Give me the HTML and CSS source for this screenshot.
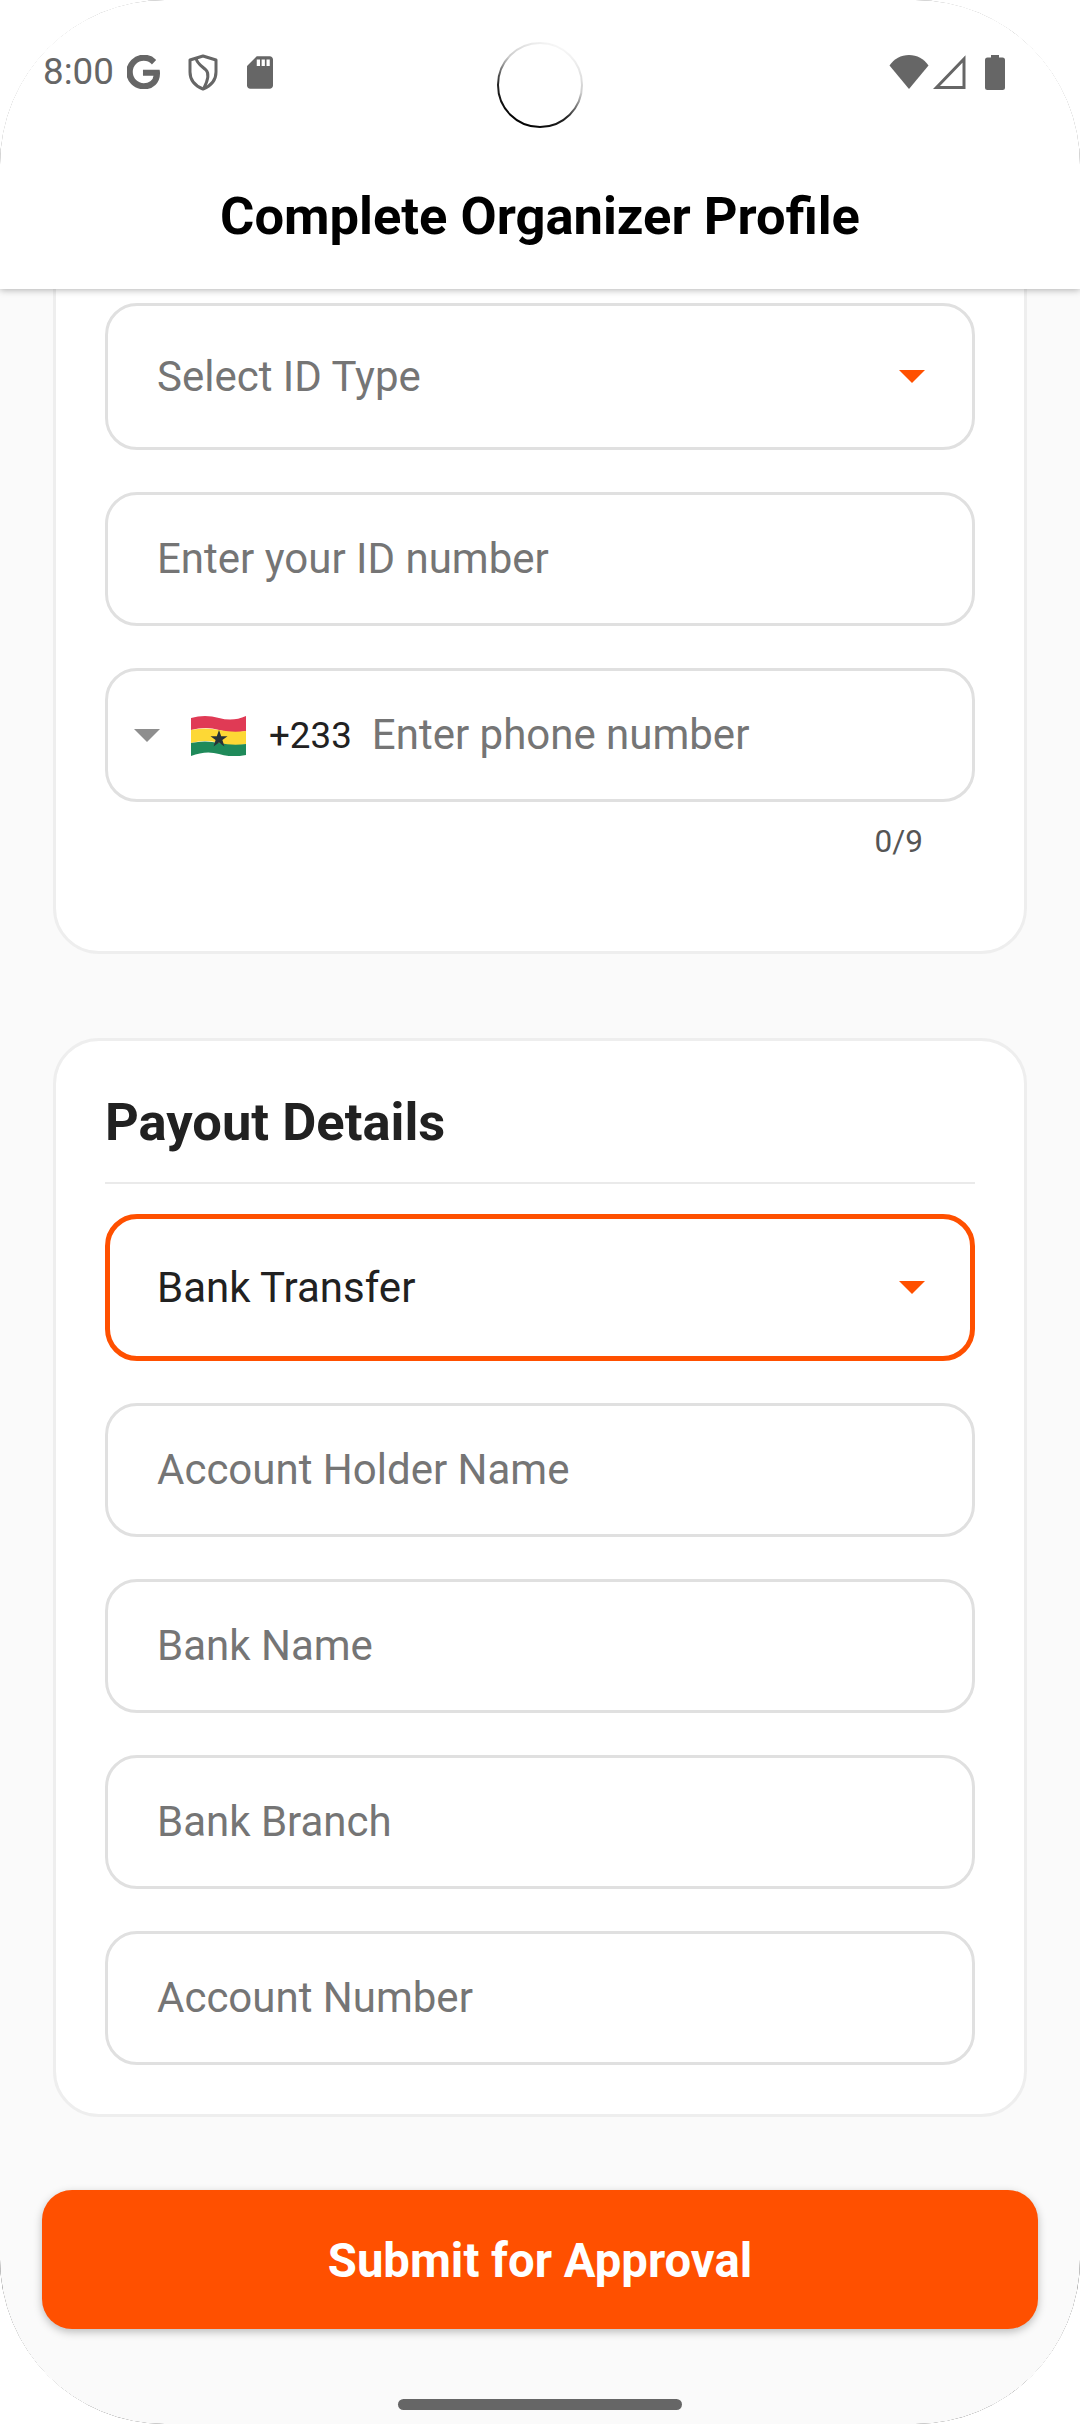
FILE: index.html
```
<!DOCTYPE html>
<html lang="en">
<head>
<meta charset="utf-8">
<title>Complete Organizer Profile</title>
<link rel="stylesheet" href="styles.css">
</head>
<body>
<div class="screen">
  <header class="appbar">
    <div class="status">
      <span class="time">8:00</span>
      <svg class="ic ic-g" viewBox="2 2 20 20"><path fill="#666" stroke="#666" stroke-width="1" d="M21.35 11.1h-9.17v2.73h6.51c-.33 3.81-3.5 5.44-6.5 5.44C8.36 19.27 5 16.25 5 12c0-4.1 3.2-7.27 7.2-7.27 3.09 0 4.9 1.97 4.9 1.97L19 4.72S16.56 2 12.1 2C6.42 2 2.03 6.8 2.03 12c0 5.05 4.13 10 10.22 10 5.35 0 9.25-3.67 9.25-9.09 0-1.15-.15-1.81-.15-1.81z"/></svg>
      <svg class="ic ic-shield" viewBox="0 0 30 37"><path fill="none" stroke="#666" stroke-width="3" stroke-linejoin="round" d="M15 2 2 6v12c0 8 5.500 14 13 17 7.500-3 13-9 13-17V6z"/><path fill="none" stroke="#666" stroke-width="3" d="M8 4c1 6 6 8 10 12 3 3 3 8-2 18"/></svg>
      <svg class="ic ic-sd" viewBox="4 2 16 20"><path fill="#666" d="M18 2h-8L4.020 8 4 20c0 1.100.9 2 2 2h12c1.100 0 2-.9 2-2V4c0-1.100-.9-2-2-2zm-6 6h-2V4h2v4zm3 0h-2V4h2v4zm3 0h-2V4h2v4z"/></svg>
      <div class="status-right">
        <svg class="ic ic-wifi" viewBox="0 0 40 34"><path fill="#666" d="M20 34 .5 10.500C5 4 12 0 20 0s15 4 19.500 10.500z"/></svg>
        <svg class="ic ic-signal" viewBox="0 0 33 34"><path fill="none" stroke="#666" stroke-width="3" d="M31 4v28.500H3.500z"/></svg>
        <svg class="ic ic-batt" viewBox="0 0 20 35"><path fill="#666" d="M6 0h8v2.500h3.500A2.500 2.500 0 0 1 20 5v27.500a2.500 2.500 0 0 1-2.500 2.500h-15A2.500 2.500 0 0 1 0 32.500V5a2.500 2.500 0 0 1 2.500-2.500H6z"/></svg>
      </div>
    </div>
    <h1 class="title">Complete Organizer Profile</h1>
  </header>

  <main class="content">
    <section class="card card-clipped">
      <div class="fields">
        <div class="field field-select"><span class="ph">Select ID Type</span><svg class="arrow" viewBox="0 0 26 13"><path fill="#ff5000" d="M0 0h26L13 13z"/></svg></div>
        <div class="field"><span class="ph">Enter your ID number</span></div>
        <div class="field field-phone">
          <svg class="arrow-gray" viewBox="0 0 26 13"><path fill="#8e8e8e" d="M0 0h26L13 13z"/></svg>
          <svg class="flag" viewBox="0 0 55 41">
            <path fill="#e03a55" d="M0 3Q14-1 28 3T55 1V16Q41 19 28 15T0 15z"/>
            <path fill="#fdd835" d="M0 15Q14 12 28 15T55 16V29Q41 32 28 28T0 28z"/>
            <path fill="#1f8a5a" d="M0 28Q14 25 28 28T55 29V40Q41 43 28 39T0 41z"/>
            <path fill="#263238" d="m28 15 2.200 6.300h6.300l-5.100 3.800 2 6.300-5.400-3.900-5.400 3.900 2-6.300-5.100-3.800h6.300z"/>
          </svg>
          <span class="dial">+233</span>
          <span class="ph">Enter phone number</span>
        </div>
      </div>
      <div class="counter">0/9</div>
    </section>

    <section class="card card-payout">
      <h2 class="card-title">Payout Details</h2>
      <div class="fields">
        <div class="field field-select field-active"><span class="val">Bank Transfer</span><svg class="arrow" viewBox="0 0 26 13"><path fill="#ff5000" d="M0 0h26L13 13z"/></svg></div>
        <div class="field"><span class="ph">Account Holder Name</span></div>
        <div class="field"><span class="ph">Bank Name</span></div>
        <div class="field"><span class="ph">Bank Branch</span></div>
        <div class="field"><span class="ph">Account Number</span></div>
      </div>
    </section>
  </main>

  <footer class="actions">
    <button class="submit" type="button">Submit for Approval</button>
    <div class="home"></div>
  </footer>

  <svg class="camera" viewBox="0 0 88 88">
    <defs><linearGradient id="cam" x1="0.8" y1="0" x2="0.3" y2="1"><stop offset="0" stop-color="#000" stop-opacity="0"/><stop offset="0.4" stop-color="#000" stop-opacity=".2"/><stop offset="0.7" stop-color="#000" stop-opacity=".85"/><stop offset="1" stop-color="#000"/></linearGradient></defs>
    <circle cx="44" cy="44" r="42" fill="#fff" stroke="url(#cam)" stroke-width="2"/>
  </svg>
  <svg class="bezel" viewBox="0 0 1080 2424">
    <defs><linearGradient id="bez" x1="0" y1="0" x2="0" y2="1"><stop offset="0" stop-color="#777"/><stop offset="0.5" stop-color="#888"/><stop offset="1" stop-color="#000"/></linearGradient></defs>
    <rect x="-.5" y="-.5" width="1081" height="2425" rx="165" fill="none" stroke="url(#bez)" stroke-width="1"/>
  </svg>
</div>
</body>
</html>
```
FILE: styles.css
```
* { box-sizing: border-box; }
html, body { margin: 0; padding: 0; background: #fff; }
body { width: 1080px; height: 2424px; overflow: hidden; font-family: Roboto, sans-serif; }

.screen {
  position: relative;
  width: 1080px;
  height: 2424px;
  display: flex;
  flex-direction: column;
  background: #fafafa;
  border-radius: 165px;
  overflow: hidden;
}

.appbar {
  position: relative;
  z-index: 2;
  height: 289px;
  flex: none;
  background: #fff;
  box-shadow: 0 1px 7px rgba(0, 0, 0, .3);
  padding-top: 54px;
}
.status {
  display: flex;
  align-items: center;
  height: 36px;
  padding: 0 75px 0 43px;
}
.time { font-size: 36.750px; color: #666; line-height: 36px; }
.ic { display: block; flex: none; }
.ic-g { width: 33px; height: 34px; margin-left: 13px; }
.ic-shield { width: 30px; height: 37px; margin-left: 28px; }
.ic-sd { width: 26px; height: 33px; margin-left: 29px; }
.status-right { margin-left: auto; display: flex; align-items: center; }
.ic-wifi { width: 40px; height: 34px; }
.ic-signal { width: 33px; height: 34px; margin-left: 4px; }
.ic-batt { width: 20px; height: 35px; margin-left: 19px; }

.title {
  margin: 94px 0 0;
  text-align: center;
  font-size: 52.500px;
  line-height: 64px;
  font-weight: 700;
  color: #000;
}

.content {
  flex: 1;
  min-height: 0;
  overflow: hidden;
  padding: 0 53px;
}
.card {
  background: #fff;
  border: 3px solid #eee;
  border-radius: 46px;
  padding: 0 49px;
}
.card-clipped { margin-top: -60px; padding-top: 71px; height: 725px; }
.card-payout { margin-top: 84px; height: 1079px; }
.card-title {
  height: 143px;
  margin: 0 0 30px;
  padding-top: 49px;
  font-size: 52.500px;
  line-height: 64px;
  font-weight: 700;
  color: #212121;
  border-bottom: 2px solid #eaeaea;
}
.fields { display: flex; flex-direction: column; gap: 42px; }
.field {
  height: 134px;
  display: flex;
  align-items: center;
  padding: 0 49px;
  background: #fff;
  border: 3px solid #e0e0e0;
  border-radius: 32px;
  font-size: 42px;
  line-height: 50px;
}
.field-select { height: 147px; justify-content: space-between; padding-right: 47px; }
.field-active { border: 5px solid #ff5000; padding-left: 47px; padding-right: 45px; }
.ph { color: #757575; }
.val { color: #212121; }
.arrow { width: 26px; height: 13px; flex: none; }

.field-phone { padding: 0; }
.arrow-gray { width: 26px; height: 13px; margin-left: 26px; flex: none; }
.flag { width: 55px; height: 41px; margin-left: 31px; flex: none; }
.dial { margin-left: 23px; padding-top: 2px; font-size: 36.750px; color: #212121; }
.field-phone .ph { margin-left: 20px; }

.counter {
  margin-top: 22px;
  padding-right: 52px;
  text-align: right;
  font-size: 31.500px;
  line-height: 36px;
  color: #555;
}

.actions { flex: none; height: 234px; padding: 0 42px; position: relative; }
.submit {
  display: block;
  width: 996px;
  height: 139px;
  padding: 2px 0 0;
  border: 0;
  border-radius: 30px;
  background: #ff5000;
  color: #fff;
  font-family: inherit;
  font-size: 47.250px;
  font-weight: 700;
  box-shadow: 0 3px 8px rgba(0, 0, 0, .25);
}
.home {
  position: absolute;
  left: 398px;
  bottom: 14px;
  width: 284px;
  height: 11px;
  border-radius: 6px;
  background: #666;
}

.camera { position: absolute; z-index: 3; left: 496px; top: 41px; width: 88px; height: 88px; }
.bezel { position: absolute; z-index: 4; left: 0; top: 0; width: 1080px; height: 2424px; pointer-events: none; }
```
